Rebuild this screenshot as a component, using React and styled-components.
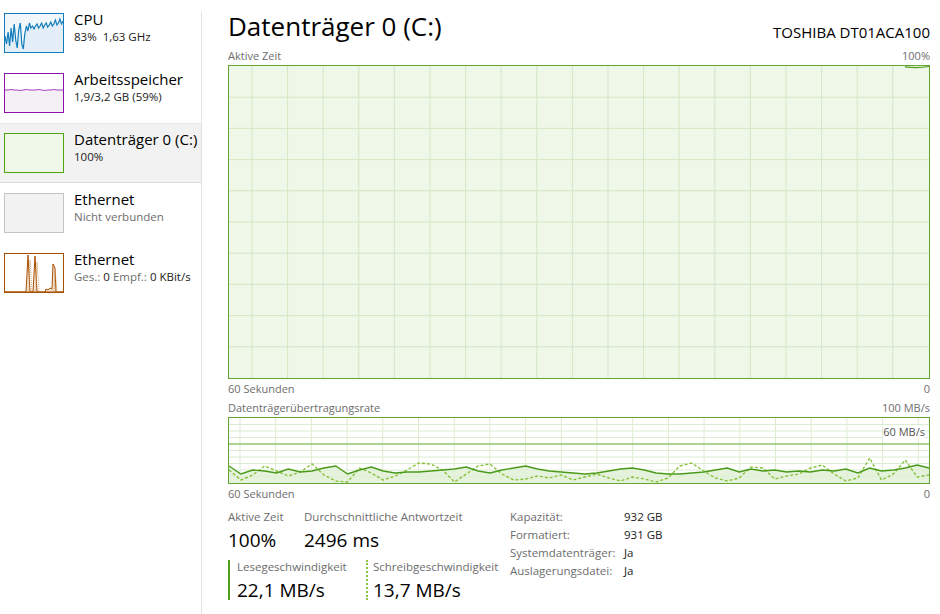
import React from 'react';
import styled, { createGlobalStyle } from 'styled-components';

const GlobalStyle = createGlobalStyle`
  html, body { margin: 0; padding: 0; background: #fff; }
  body { font-family: "Open Sans", "Noto Sans", sans-serif; color: #000; }
`;

const Window = styled.div`
  display: flex;
  width: 940px;
  height: 614px;
  overflow: hidden;
  background: #fff;
`;

const Sidebar = styled.div`
  width: 201px;
  padding-top: 3px;
  display: flex;
  flex-direction: column;
`;

const Divider = styled.div`
  width: 1px;
  margin-top: 12px;
  background: #e2e2e2;
`;

const Item = styled.div`
  display: flex;
  align-items: flex-start;
  gap: 10px;
  height: 60px;
  box-sizing: border-box;
  padding: 10px 0 0 4px;
  background: ${p => (p.$active ? '#f2f2f2' : 'transparent')};
  box-shadow: ${p => (p.$active ? 'inset 0 1px #e8e8e8, inset 0 -1px #d9d9d9' : 'none')};
`;

const Thumb = styled.div`
  width: 60px;
  height: 40px;
  box-sizing: border-box;
  border: 1px solid ${p => p.$color};
  background: ${p => p.$bg};
  flex-shrink: 0;
  svg { display: block; }
`;

const ItemText = styled.div`
  display: flex;
  flex-direction: column;
  margin-top: -4px;
`;

const ItemTitle = styled.div`
  font-size: 15px;
  line-height: 20px;
  white-space: nowrap;
`;

const ItemSub = styled.div`
  font-size: 11.5px;
  line-height: 16px;
  color: ${p => (p.$muted ? '#6d6d6d' : '#1a1a1a')};
  white-space: nowrap;
  .m { color: #6d6d6d; }
`;

const Main = styled.div`
  flex: 1;
  display: flex;
  flex-direction: column;
  padding: 0 10px 0 26px;
`;

const Header = styled.div`
  height: 46px;
  display: flex;
  justify-content: space-between;
  align-items: flex-end;
`;

const Title = styled.h1`
  margin: 0 0 3px;
  font-size: 26px;
  font-weight: 400;
  line-height: 34px;
`;

const Model = styled.div`
  font-size: 15px;
  line-height: 20px;
  margin-bottom: 4px;
`;

const Caption = styled.div`
  height: 19px;
  display: flex;
  justify-content: space-between;
  align-items: center;
  font-size: 11px;
  color: #6d6d6d;
`;

const Chart = styled.div`
  position: relative;
  height: ${p => p.$h}px;
  box-sizing: border-box;
  border: 1px solid #63a532;
  background: ${p => p.$bg};
  svg { display: block; width: 100%; height: 100%; }
`;

const ChartTag = styled.span`
  position: absolute;
  right: 4px;
  top: 7px;
  font-size: 11px;
  line-height: 14px;
  color: #555;
  background: #fff;
`;

const Stats = styled.div`
  display: flex;
  margin-top: 5px;
`;

const StatsLeft = styled.div`
  width: 282px;
  display: flex;
  flex-direction: column;
`;

const StatRow = styled.div`
  display: flex;
`;

const Stat = styled.div`
  width: ${p => p.$w}px;
  display: flex;
  flex-direction: column;
`;

const Rate = styled.div`
  width: ${p => p.$w}px;
  box-sizing: border-box;
  display: flex;
  flex-direction: column;
  margin-top: 8px;
  padding-left: ${p => (p.$dotted ? 5 : 7)}px;
  border-left: 2px ${p => (p.$dotted ? 'dotted #8cc63f' : 'solid #4e9f1c')};
  height: 40px;
  & > div:first-child { margin-top: -2px; }
`;

const StatLabel = styled.div`
  font-size: 11.5px;
  line-height: 18px;
  color: #6d6d6d;
  white-space: nowrap;
`;

const StatValue = styled.div`
  font-size: 19px;
  line-height: 24px;
  margin-top: 2px;
  white-space: nowrap;
`;

const Props = styled.div`
  display: grid;
  grid-template-columns: 114px auto;
  grid-auto-rows: 18px;
  align-items: center;
  font-size: 11.5px;
  align-content: start;
  margin-top: -1px;
`;

const PropKey = styled.div`
  color: #6d6d6d;
`;

const PropVal = styled.div`
  color: #1a1a1a;
`;

const pts = (arr, step, x0 = 0) => arr.map((y, i) => `${(x0 + i * step).toFixed(1)},${y}`).join(' ');

const cpu = [22, 30, 18, 32, 14, 28, 10, 26, 34, 16, 9, 30, 35, 20, 12, 17, 9, 14, 12, 15, 12, 10, 14, 12, 9, 14, 11, 9, 13, 11, 8, 12, 10, 6, 11, 9, 5, 10, 7];

const CpuThumb = () => (
  <svg width="58" height="38" viewBox="0 0 58 38">
    <polygon points={`0,38 ${pts(cpu, 58 / 38)} 58,38`} fill="#e3eef8" />
    <polyline points={pts(cpu, 58 / 38)} fill="none" stroke="#117dbb" strokeWidth="1.2" />
  </svg>
);

const mem = [16, 16, 15.5, 16, 16, 16.5, 16, 15.5, 16, 16, 16, 15.5, 16, 16.5, 16, 16, 15.5, 16, 16, 16];

const MemThumb = () => (
  <svg width="58" height="38" viewBox="0 0 58 38">
    <polygon points={`0,38 ${pts(mem, 58 / 19)} 58,38`} fill="#f4f0f5" />
    <polyline points={pts(mem, 58 / 19)} fill="none" stroke="#8b12ae" strokeWidth="0.8" />
  </svg>
);

const EthThumb = () => (
  <svg width="58" height="38" viewBox="0 0 58 38">
    <polygon
      points="0,38 21,38 23,1 25,38 28,38 30,2 32,38 40,38 41,35 43,36 45,34 47,35 48,10 50,14 51,38 58,38"
      fill="#f3e3d4"
      stroke="#a74f01"
      strokeWidth="1"
    />
    <polyline points="24,38 25,6 27,38 31,38 32,8 34,38 49,38 50,16 52,38" fill="none" stroke="#c98a4f" strokeWidth="0.8" strokeDasharray="1 1" />
  </svg>
);

const range = (n, f) => Array.from({ length: n }, (_, i) => f(i));

const ActiveChart = () => (
  <svg viewBox="0 0 700 312" preserveAspectRatio="none">
    {range(19, i => (
      <line key={'v' + i} x1={23 + i * 35.6} x2={23 + i * 35.6} y1="0" y2="312" stroke="#d2e7c4" strokeWidth="1" />
    ))}
    {range(9, i => (
      <line key={'h' + i} x1="0" x2="700" y1={31.2 * (i + 1)} y2={31.2 * (i + 1)} stroke="#d2e7c4" strokeWidth="1" />
    ))}
    <path d="M676,0.8 Q689,2.5 700,0.5" fill="none" stroke="#4e9f1c" strokeWidth="1.2" />
  </svg>
);

const read = [48, 56, 52, 53, 55, 51, 54, 53, 50, 48, 56, 52, 49, 53, 55, 54, 54, 53, 52, 51, 49, 53, 55, 52, 50, 48, 51, 53, 54, 55, 56, 55, 53, 51, 50, 52, 55, 56, 56, 55, 54, 52, 50, 54, 51, 53, 52, 54, 53, 54, 52, 53, 51, 55, 50, 53, 52, 50, 47, 50];
const write = [52, 62, 57, 48, 53, 58, 54, 46, 57, 63, 64, 50, 55, 62, 58, 52, 45, 46, 52, 64, 56, 48, 46, 56, 62, 61, 58, 60, 57, 62, 59, 56, 60, 63, 59, 61, 64, 60, 48, 45, 53, 60, 63, 60, 49, 50, 61, 58, 56, 50, 47, 56, 63, 60, 40, 62, 56, 42, 59, 57];

const RateChart = () => {
  const step = 700 / 59;
  return (
    <svg viewBox="0 0 700 65" preserveAspectRatio="none">
      {range(20, i => (
        <line key={'v' + i} x1={11 + i * 35.7} x2={11 + i * 35.7} y1="0" y2="65" stroke="#dcecd1" strokeWidth="1" />
      ))}
      {range(9, i => (
        <line
          key={'h' + i}
          x1="0"
          x2="700"
          y1={6.5 * (i + 1)}
          y2={6.5 * (i + 1)}
          stroke={i === 3 ? '#92c76a' : '#dcecd1'}
          strokeWidth={i === 3 ? 1.3 : 1}
        />
      ))}
      <polygon points={`0,65 ${pts(read, step)} 700,65`} fill="#e1f0d6" opacity="0.85" />
      <polyline points={pts(write, step)} fill="none" stroke="#86c23a" strokeWidth="1.4" strokeDasharray="3 2" />
      <polyline points={pts(read, step)} fill="none" stroke="#4a9a1a" strokeWidth="1.4" />
    </svg>
  );
};

export default function App() {
  return (
    <Window>
      <GlobalStyle />
      <Sidebar>
        <Item>
          <Thumb $color="#117dbb" $bg="#f1f6fa"><CpuThumb /></Thumb>
          <ItemText>
            <ItemTitle>CPU</ItemTitle>
            <ItemSub>83%&nbsp; 1,63 GHz</ItemSub>
          </ItemText>
        </Item>
        <Item>
          <Thumb $color="#8b12ae" $bg="#fff"><MemThumb /></Thumb>
          <ItemText>
            <ItemTitle>Arbeitsspeicher</ItemTitle>
            <ItemSub>1,9/3,2 GB (59%)</ItemSub>
          </ItemText>
        </Item>
        <Item $active>
          <Thumb $color="#4da60c" $bg="#eff7e9" />
          <ItemText>
            <ItemTitle>Datenträger 0 (C:)</ItemTitle>
            <ItemSub>100%</ItemSub>
          </ItemText>
        </Item>
        <Item>
          <Thumb $color="#c4c4c4" $bg="#f2f2f2" />
          <ItemText>
            <ItemTitle>Ethernet</ItemTitle>
            <ItemSub $muted>Nicht verbunden</ItemSub>
          </ItemText>
        </Item>
        <Item>
          <Thumb $color="#a74f01" $bg="#fff"><EthThumb /></Thumb>
          <ItemText>
            <ItemTitle>Ethernet</ItemTitle>
            <ItemSub><span className="m">Ges.:</span> 0 <span className="m">Empf.:</span> 0 KBit/s</ItemSub>
          </ItemText>
        </Item>
      </Sidebar>
      <Divider />
      <Main>
        <Header>
          <Title>Datenträger 0 (C:)</Title>
          <Model>TOSHIBA DT01ACA100</Model>
        </Header>
        <Caption><span>Aktive Zeit</span><span>100%</span></Caption>
        <Chart $h={314} $bg="#eff7e9"><ActiveChart /></Chart>
        <Caption><span>60 Sekunden</span><span>0</span></Caption>
        <Caption><span>Datenträgerübertragungsrate</span><span>100 MB/s</span></Caption>
        <Chart $h={67} $bg="#fff">
          <RateChart />
          <ChartTag>60 MB/s</ChartTag>
        </Chart>
        <Caption><span>60 Sekunden</span><span>0</span></Caption>
        <Stats>
          <StatsLeft>
            <StatRow>
              <Stat $w={76}>
                <StatLabel>Aktive Zeit</StatLabel>
                <StatValue>100%</StatValue>
              </Stat>
              <Stat $w={206}>
                <StatLabel>Durchschnittliche Antwortzeit</StatLabel>
                <StatValue>2496 ms</StatValue>
              </Stat>
            </StatRow>
            <StatRow>
              <Rate $w={138}>
                <StatLabel>Lesegeschwindigkeit</StatLabel>
                <StatValue>22,1 MB/s</StatValue>
              </Rate>
              <Rate $w={144} $dotted>
                <StatLabel>Schreibgeschwindigkeit</StatLabel>
                <StatValue>13,7 MB/s</StatValue>
              </Rate>
            </StatRow>
          </StatsLeft>
          <Props>
            <PropKey>Kapazität:</PropKey><PropVal>932 GB</PropVal>
            <PropKey>Formatiert:</PropKey><PropVal>931 GB</PropVal>
            <PropKey>Systemdatenträger:</PropKey><PropVal>Ja</PropVal>
            <PropKey>Auslagerungsdatei:</PropKey><PropVal>Ja</PropVal>
          </Props>
        </Stats>
      </Main>
    </Window>
  );
}
